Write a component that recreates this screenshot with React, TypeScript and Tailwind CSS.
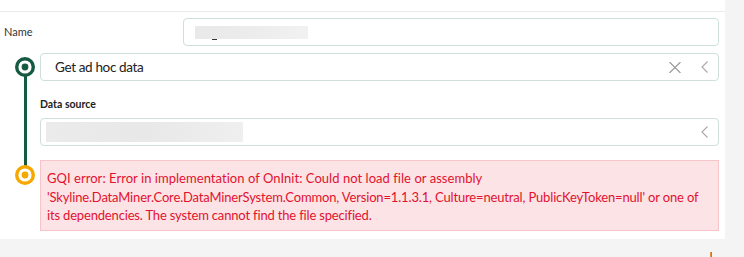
import React from "react";

const font = { fontFamily: 'Lato, "Open Sans", sans-serif' };

function XIcon() {
  return (
    <svg width="12" height="11" viewBox="0 0 12 11" className="block">
      <path d="M0.5 0 L11.5 11 M11.5 0 L0.5 11" stroke="#9a9a9a" strokeWidth="1.2" fill="none" />
    </svg>
  );
}

function Chevron() {
  return (
    <svg width="7" height="12" viewBox="0 0 7 12" className="block">
      <path d="M6.5 0.5 L1 6 L6.5 11.5" stroke="#a8a8a8" strokeWidth="1.1" fill="none" />
    </svg>
  );
}

function Ring({ color }: { color: string }) {
  return (
    <svg width="20" height="20" viewBox="0 0 20 20" className="block shrink-0">
      <circle cx="10" cy="10" r="8.3" stroke={color} strokeWidth="3.4" fill="white" />
      <circle cx="10" cy="10" r="3.4" fill={color} />
    </svg>
  );
}

export default function App() {
  return (
    <div className="w-[744px] h-[257px] bg-[#f4f4f4] overflow-hidden relative" style={font}>
      <div className="w-[725px] h-[239px] bg-white flex flex-col">
        <div className="h-[11px]" />
        <div className="h-px bg-[#e7ecea]" />
        <div className="flex flex-col pr-[6px] pt-[6px]">
          {/* Name row */}
          <div className="flex items-center h-[28px]">
            <div className="w-[183px] pl-[4px] text-[11px] text-[#333]">Name</div>
            <div className="flex-1 min-w-0 h-[28px] border border-[#cfdfdb] rounded-[4px] flex items-center pl-[11px]">
              <div className="relative w-[113px] h-[13px] bg-gradient-to-r from-[#e9e9e9] via-[#ececec] to-[#f1f1f1]">
                <div className="absolute left-[17px] top-[13px] w-[5px] h-[1px] bg-[#333]" />
              </div>
            </div>
          </div>
          {/* Steps */}
          <div className="flex mt-[7px]">
            <div className="w-[40px] shrink-0 pl-[15px] pr-[5px] flex flex-col items-center pt-[4px] pb-[46px]">
              <Ring color="#165a42" />
              <div className="w-[3px] flex-1 bg-[#165a42] -my-[1px]" />
              <Ring color="#f6a800" />
            </div>
            <div className="flex-1 min-w-0 flex flex-col">
              <div className="h-[28px] border border-[#cfdfdb] rounded-[4px] flex items-center pl-[14px] pr-[10px]">
                <span className="text-[13.5px] tracking-[-0.35px] text-[#222] flex-1">Get ad hoc data</span>
                <XIcon />
                <div className="w-[20px]" />
                <Chevron />
              </div>
              <div className="mt-[16px] h-[14px] leading-[14px] text-[10.5px] font-bold text-[#222]">Data source</div>
              <div className="mt-[7px] h-[28px] border border-[#cfdfdb] rounded-[4px] flex items-center pl-[5px] pr-[10px]">
                <div className="w-[197px] h-[20px] bg-gradient-to-r from-[#ebebeb] via-[#e8e8e8] to-[#efefef] flex-none" />
                <div className="flex-1" />
                <Chevron />
              </div>
              <div className="mt-[14px] h-[71px] bg-[#fce4e6] border border-[#f6c5ca] px-[6px] pt-[8px] text-[13px] leading-[18.5px] text-[#e3112e] whitespace-nowrap overflow-hidden">
                <div className="tracking-[0.04px]">GQI error: Error in implementation of OnInit: Could not load file or assembly</div>
                <div className="tracking-[-0.16px]">'Skyline.DataMiner.Core.DataMinerSystem.Common, Version=1.1.3.1, Culture=neutral, PublicKeyToken=null' or one of</div>
                <div className="tracking-[-0.17px]">its dependencies. The system cannot find the file specified.</div>
              </div>
            </div>
          </div>
        </div>
      </div>
      <div className="absolute left-[710px] top-[252px] w-[1px] h-[5px] bg-[#e8913a]" />
      <div className="absolute left-[711px] top-[252px] w-[1px] h-[5px] bg-[#5a8fc8]" />
    </div>
  );
}
